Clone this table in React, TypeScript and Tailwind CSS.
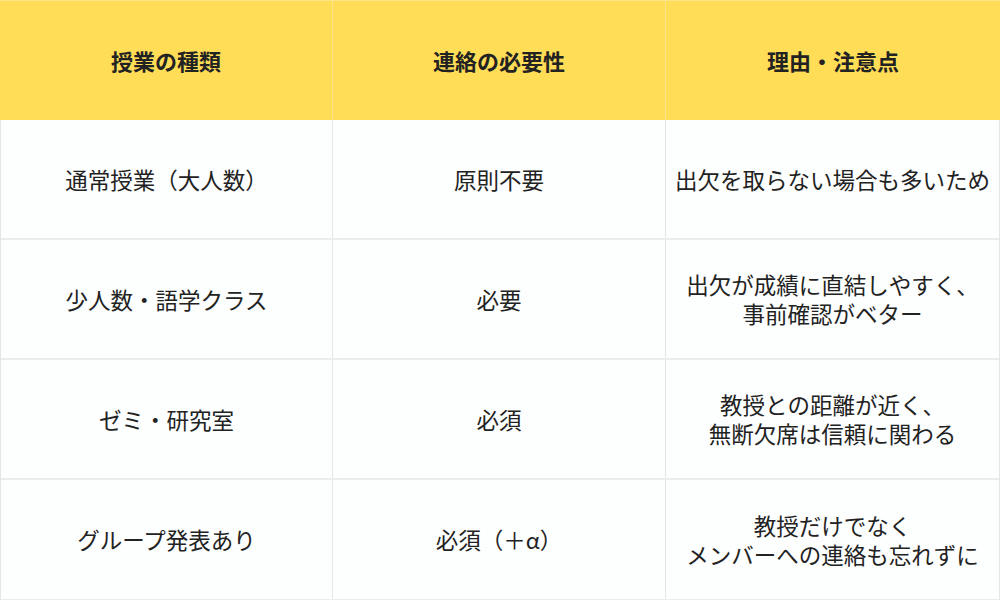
import React from 'react';

const rows: { kind: string; need: string; reason: string[] }[] = [
  { kind: '通常授業（大人数）', need: '原則不要', reason: ['出欠を取らない場合も多いため'] },
  { kind: '少人数・語学クラス', need: '必要', reason: ['出欠が成績に直結しやすく、', '事前確認がベター'] },
  { kind: 'ゼミ・研究室', need: '必須', reason: ['教授との距離が近く、', '無断欠席は信頼に関わる'] },
  { kind: 'グループ発表あり', need: '必須（＋α）', reason: ['教授だけでなく', 'メンバーへの連絡も忘れずに'] },
];

const font = { fontFamily: '"Noto Sans CJK JP", "Noto Sans", sans-serif' };

export default function App() {
  return (
    <div className="w-[1000px] h-[600px] bg-white text-[#222]" style={font}>
      <div className="grid grid-cols-[333px_333px_334px] h-[120px] bg-[#ffdd57] font-bold text-[22px] border-t border-[#fde68a]">
        <div className="flex items-center justify-center border-r border-[#fbe38a]">授業の種類</div>
        <div className="flex items-center justify-center border-r border-[#fbe38a]">連絡の必要性</div>
        <div className="flex items-center justify-center">理由・注意点</div>
      </div>
      <div className="border-l border-r border-[#e6e6e6] text-[22.5px] leading-[29px]">
        {rows.map((r, i) => (
          <div
            key={i}
            className={`grid grid-cols-[332px_333px_333px] h-[120px] bg-[#fdfefe] ${i < rows.length - 1 ? 'border-b-2' : 'border-b'} border-[#ececec]`}
          >
            <div className="flex items-center justify-center border-r border-[#e6e6e6]">{r.kind}</div>
            <div className="flex items-center justify-center border-r border-[#e6e6e6]">{r.need}</div>
            <div className="flex flex-col items-center justify-center text-center">
              {r.reason.map((l, j) => (
                <span key={j}>{l}</span>
              ))}
            </div>
          </div>
        ))}
      </div>
    </div>
  );
}
